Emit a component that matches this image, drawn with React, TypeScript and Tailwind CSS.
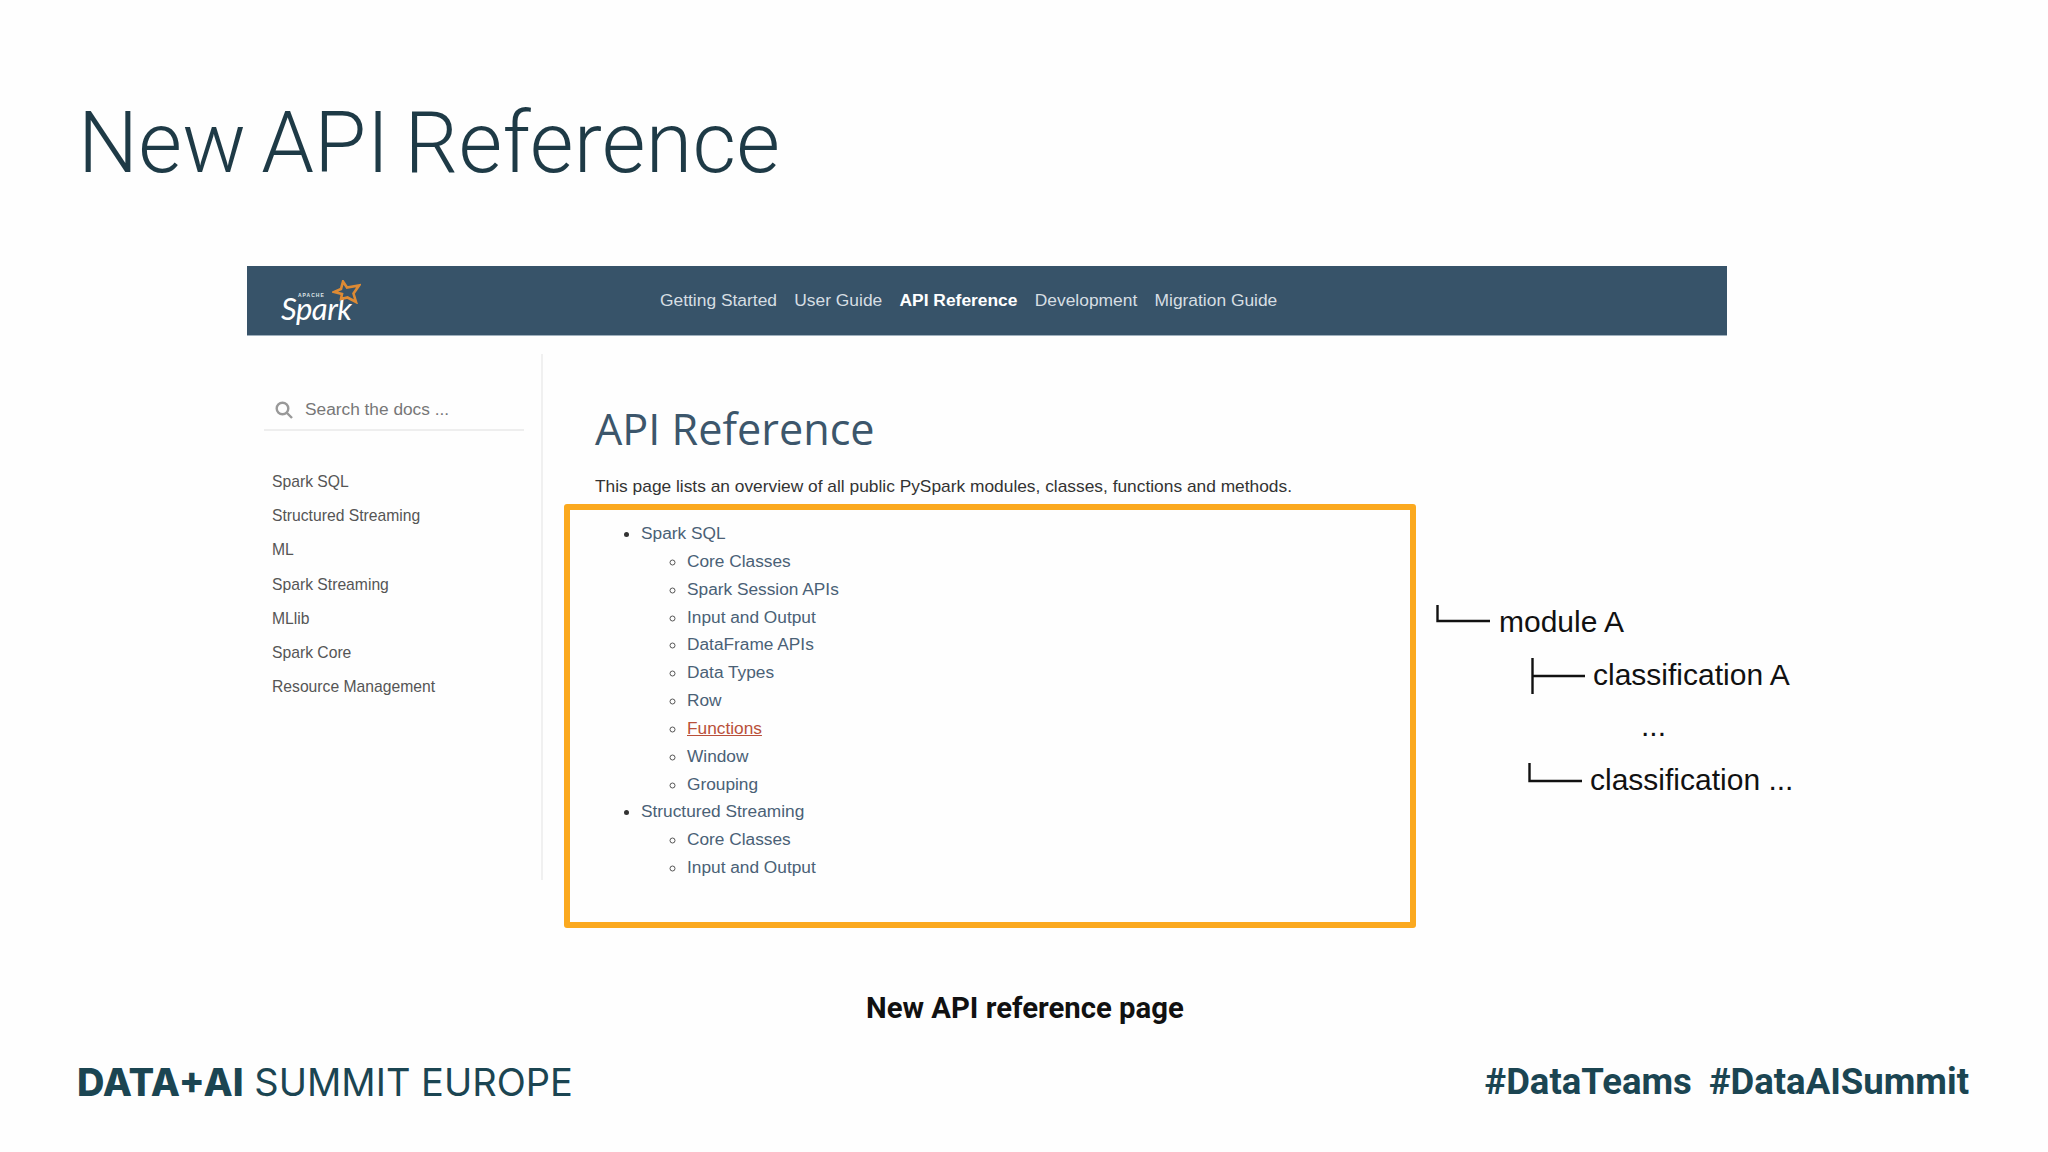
import React from "react";

const nav = ["Getting Started", "User Guide", "API Reference", "Development", "Migration Guide"];
const side = ["Spark SQL", "Structured Streaming", "ML", "Spark Streaming", "MLlib", "Spark Core", "Resource Management"];
const sql = ["Core Classes", "Spark Session APIs", "Input and Output", "DataFrame APIs", "Data Types", "Row", "Functions", "Window", "Grouping"];
const streaming = ["Core Classes", "Input and Output"];

function SubList({ items }: { items: string[] }) {
  return (
    <ul className="list-[circle] pl-[46px]">
      {items.map((t) => (
        <li key={t} className={t === "Functions" ? "text-[#b9503a] underline marker:text-[#555]" : "text-[#4a6176] marker:text-[#555]"}>
          {t}
        </li>
      ))}
    </ul>
  );
}

function Corner({ height }: { height: number }) {
  return (
    <svg width="54" height={height} viewBox={`0 0 54 ${height}`} className="mt-[2px] shrink-0" fill="none" stroke="#111" strokeWidth="2.4">
      <path d={`M1.5 0V${height - 2}H54`} />
    </svg>
  );
}

function Tee() {
  return (
    <svg width="54" height="36" viewBox="0 0 54 36" className="mt-[2px] shrink-0" fill="none" stroke="#111" strokeWidth="2.4">
      <path d="M1.5 0V36M1.5 18H54" />
    </svg>
  );
}

export default function App() {
  return (
    <div className="flex h-[1152px] w-[2048px] flex-col overflow-hidden bg-[#fefefe] font-['Roboto',sans-serif]">
      <h1 className="pl-[78px] pt-[94px] text-[84.5px] font-light leading-[100px] tracking-[0.3px] text-[#1e3a46] [word-spacing:-6px]">New API Reference</h1>

      <section className="ml-[247px] mt-[72px] w-[1480px] font-['Liberation_Sans',sans-serif]">
        <nav className="flex h-[70px] items-center border-b border-[#9fb0bd] bg-[#375369]">
          <div className="relative ml-[34px] h-[50px] w-[84px] shrink-0">
            <span className="absolute left-[17px] top-[17px] text-[5px] font-bold leading-none tracking-[1px] text-[#dfe5e8]">APACHE</span>
            <span className="absolute left-0 top-[22px] font-['Lato',sans-serif] text-[31px] italic leading-[20px] tracking-[-0.5px] text-white">Spark</span>
            <svg className="absolute left-[51px] top-[4px]" width="29" height="24" viewBox="0 0 29 24" fill="none" stroke="#dd8a34" strokeWidth="2.6">
              <path d="M11 1.5L15 7.5L27 5.5L21.5 13.5L24 22L15.5 17.5L9 19L10 14L2 12L9 9Z" />
            </svg>
          </div>
          <div className="ml-[295px] flex gap-[17.3px] text-[17.4px] text-[#d6dee3]">
            {nav.map((n) => (
              <span key={n} className={n === "API Reference" ? "font-bold text-white" : ""}>
                {n}
              </span>
            ))}
          </div>
        </nav>

        <div className="flex">
          <aside className="mt-[18px] h-[526px] w-[296px] shrink-0 border-r-2 border-[#f0f0f0] pl-[17px] pr-[17px] pt-[36px]">
            <div className="flex h-[41px] items-center gap-[12px] border-b-2 border-[#eeeeee] pl-[11px] text-[17.3px] text-[#777]">
              <svg width="18" height="18" viewBox="0 0 18 18" fill="none" stroke="#999" strokeWidth="2.4">
                <circle cx="7.5" cy="7.5" r="5.8" />
                <path d="M12 12l5 5" />
              </svg>
              <span>Search the docs ...</span>
            </div>
            <ul className="mt-[34px] pl-[8px] text-[15.7px] leading-[34.2px] text-[#555]">
              {side.map((s) => (
                <li key={s}>{s}</li>
              ))}
            </ul>
          </aside>

          <main className="ml-[21px] w-[852px] shrink-0">
            <h2 className="ml-[31px] mt-[65px] font-['Open_Sans',sans-serif] text-[43.2px] leading-[56px] text-[#3c566b]">API Reference</h2>
            <p className="ml-[31px] mt-[17px] text-[17.35px] leading-[24px] text-[#333]">
              This page lists an overview of all public PySpark modules, classes, functions and methods.
            </p>
            <div className="mt-[6px] h-[424px] rounded-[3px] border-[6px] border-[#fba91f] pl-[71px] pt-[10px] text-[17.3px] leading-[27.85px]">
              <ul className="list-disc">
                <li className="text-[#4a6176] marker:text-[#333]">
                  Spark SQL
                  <SubList items={sql} />
                </li>
                <li className="text-[#4a6176] marker:text-[#333]">
                  Structured Streaming
                  <SubList items={streaming} />
                </li>
              </ul>
            </div>
          </main>

          <div className="ml-[20px] mt-[267px] shrink-0 text-[30px] leading-[38px] text-[#111]">
            <div className="flex items-start gap-[9px]">
              <Corner height={18} />
              <span>module A</span>
            </div>
            <div className="ml-[95px] mt-[15px] flex items-start gap-[8px]">
              <Tee />
              <span>classification A</span>
            </div>
            <div className="ml-[205px] mt-[13px]">...</div>
            <div className="ml-[92px] mt-[16px] flex items-start gap-[8px]">
              <Corner height={20} />
              <span>classification ...</span>
            </div>
          </div>
        </div>
      </section>

      <p className="mt-[62px] pl-[866px] text-[29.3px] font-bold leading-[36px] text-[#111]">New API reference page</p>

      <footer className="mt-[33px] flex items-center justify-between pl-[77px] pr-[79px]">
        <div className="font-['Inter',sans-serif] text-[38px] leading-[46px] text-[#1b4552]">
          <span className="font-extrabold">DATA+AI</span> <span>SUMMIT EUROPE</span>
        </div>
        <div className="flex gap-[17px] text-[36.5px] font-bold leading-[46px] text-[#1b4552]">
          <span>#DataTeams</span>
          <span>#DataAISummit</span>
        </div>
      </footer>
    </div>
  );
}
